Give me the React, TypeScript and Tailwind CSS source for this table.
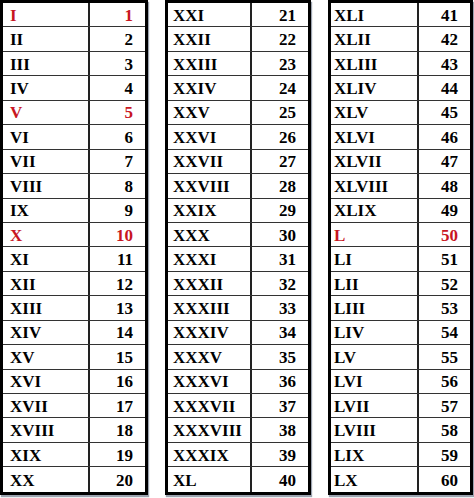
const RED = [1, 5, 10, 50];

function toRoman(n: number) {
  const map: [number, string][] = [
    [50, 'L'],
    [40, 'XL'],
    [10, 'X'],
    [9, 'IX'],
    [5, 'V'],
    [4, 'IV'],
    [1, 'I'],
  ];
  let out = '';
  let rest = n;
  for (const [v, s] of map) {
    while (rest >= v) {
      out += s;
      rest -= v;
    }
  }
  return out;
}

const columns = [
  { start: 1, width: 'w-[148px]', left: 'w-[87px]', pad: 'pl-[7px]' },
  { start: 21, width: 'w-[146px]', left: 'w-[84px]', pad: 'pl-[5px]' },
  { start: 41, width: 'w-[145px]', left: 'w-[88px]', pad: 'pl-[3px]' },
];

export default function App() {
  return (
    <div className="flex h-[498px] w-[474px] gap-[17px] bg-white font-[family-name:Liberation_Serif,Times_New_Roman,serif] text-[17px] font-bold text-black">
      {columns.map((col) => (
        <div
          className={`${col.width} h-[495px] border-[3px] border-black shadow-[1px_2px_1px_#9ca3af]`}
          key={col.start}
        >
          {Array.from({ length: 20 }, (_, i) => col.start + i).map((n, i) => {
            const red = RED.includes(n);
            return (
              <div
                className={`flex h-[24.45px] ${i < 19 ? 'border-b border-[#333]' : ''} ${red ? 'text-[#c8161f]' : ''}`}
                key={n}
              >
                <div
                  className={`${col.left} ${col.pad} flex shrink-0 items-center border-r-2 border-[#222] pt-px leading-none`}
                >
                  {toRoman(n)}
                </div>
                <div className="flex flex-1 items-center justify-end pt-px pr-[12px] leading-none">
                  {n}
                </div>
              </div>
            );
          })}
        </div>
      ))}
    </div>
  );
}
